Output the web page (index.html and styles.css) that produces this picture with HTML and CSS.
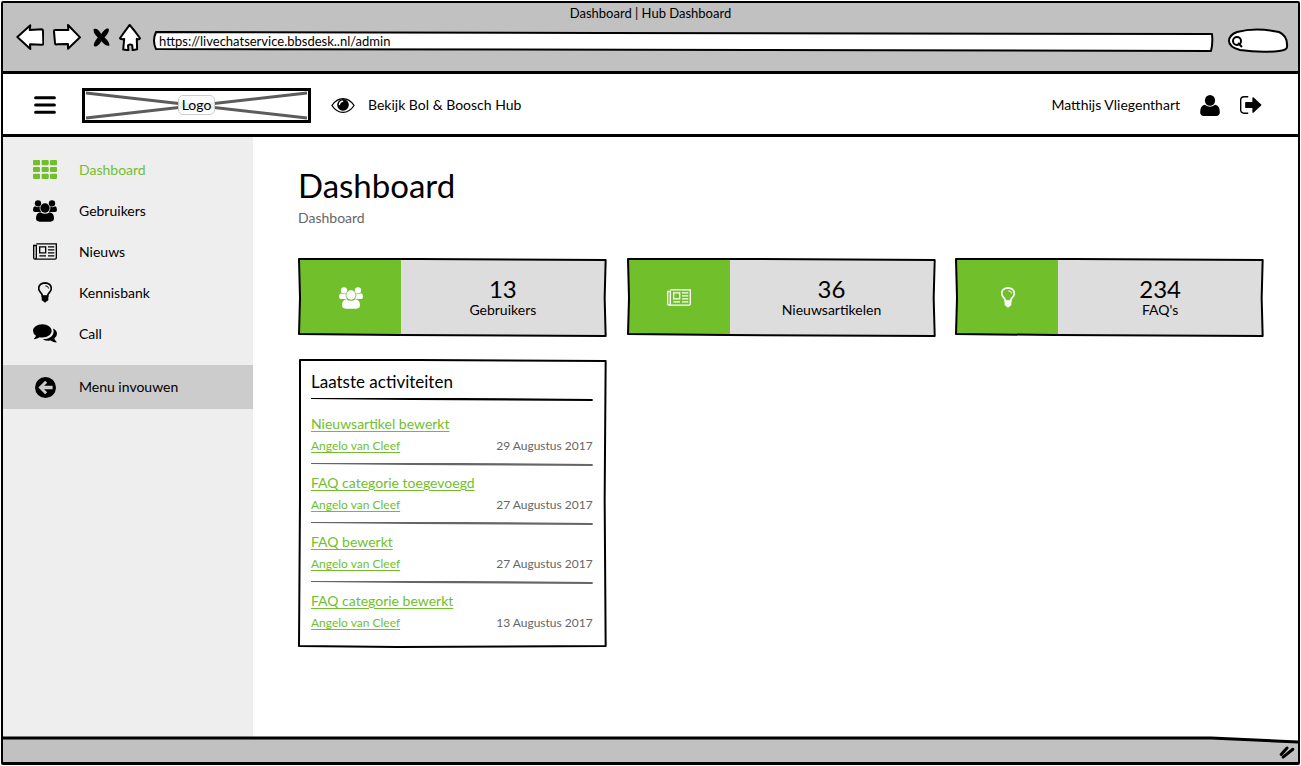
FILE: index.html
```html
<!DOCTYPE html>
<html lang="nl">
<head>
<meta charset="utf-8">
<meta name="viewport" content="width=device-width, initial-scale=1">
<title>Dashboard | Hub Dashboard</title>
<link rel="stylesheet" href="styles.css">
</head>
<body>
<svg class="sprite" aria-hidden="true">
  <symbol id="i-grid" viewBox="0 0 72 57"><path d="M3 0h15q3 0 3 3v10q0 3-3 3H3q-3 0-3-3V3q0-3 3-3zM29 0h15q3 0 3 3v10q0 3-3 3H29q-3 0-3-3V3q0-3 3-3zM54 0h15q3 0 3 3v10q0 3-3 3H54q-3 0-3-3V3q0-3 3-3zM3 21h15q3 0 3 3v9q0 3-3 3H3q-3 0-3-3v-9q0-3 3-3zM29 21h15q3 0 3 3v9q0 3-3 3H29q-3 0-3-3v-9q0-3 3-3zM54 21h15q3 0 3 3v9q0 3-3 3H54q-3 0-3-3v-9q0-3 3-3zM3 41h15q3 0 3 3v10q0 3-3 3H3q-3 0-3-3V44q0-3 3-3zM29 41h15q3 0 3 3v10q0 3-3 3H29q-3 0-3-3V44q0-3 3-3zM54 41h15q3 0 3 3v10q0 3-3 3H54q-3 0-3-3V44q0-3 3-3z"/></symbol>
  <symbol id="i-users" viewBox="0 0 72 66"><circle cx="15" cy="10" r="9.5"/><circle cx="57" cy="10" r="9.5"/><circle cx="36" cy="24" r="14"/><path d="M5 19q9 5 15 0q-2 10 4 17H6q-6 0-6-6q0-9 5-11zM67 19q-9 5-15 0q2 10-4 17h18q6 0 6-6q0-9-5-11zM22 37q14 9 28 0q13 2 13 18q0 10-11 10H20q-11 0-11-10q0-16 13-18z"/></symbol>
  <symbol id="i-news" viewBox="0 0 72 50"><path d="M10 2h60v42q0 4-4 4H6q-4 0-4-4V7h8v36q0 4-4 4M19 38h20M45 38h19M45 29h19M45 20h19M45 11h19M20 11h18v18H20z" fill="none" stroke="currentColor" stroke-width="4"/></symbol>
  <symbol id="i-bulb" viewBox="0 0 42 62"><path d="M13 42q0-6-6-12Q2 24 2 18Q3 3 21 2Q39 3 40 18q0 6-5 12q-6 6-6 12z" fill="none" stroke="currentColor" stroke-width="5"/><path d="M11 41h20v13q-2 2-5 3q-2 4-5 4t-5-4q-3-1-5-3z"/><path d="M22 11q9 0 10 8" fill="none" stroke="currentColor" stroke-width="3"/></symbol>
  <symbol id="i-chat" viewBox="0 0 72 56"><path d="M28 0c16 0 28 9 28 20S44 40 28 40q-4 0-8-1q-7 5-16 6q-2-1 0-3q4-3 5-7Q0 29 0 20C0 9 12 0 28 0zM60 13q12 6 12 16q0 9-8 14q1 5 6 9q2 2 0 3q-9 0-17-6q-14 2-24-4q18 0 27-9q9-10 4-23z"/></symbol>
  <symbol id="i-fold" viewBox="0 0 62 62"><path fill-rule="evenodd" d="M31 0a31 31 0 1 0 0 62a31 31 0 1 0 0-62zM10 31L30 11l6 6-9 9h25v10H27l9 9-6 6z"/></symbol>
  <symbol id="i-bars" viewBox="0 0 62 52"><path d="M4 5h54M4 26h54M4 47h54" stroke="currentColor" stroke-width="9" stroke-linecap="round"/></symbol>
  <symbol id="i-eye" viewBox="0 0 72 46"><path d="M2 23Q16 2 36 2t34 21Q56 44 36 44T2 23z" fill="none" stroke="currentColor" stroke-width="4"/><path fill-rule="evenodd" d="M36 3a18 18 0 1 0 0 36a18 18 0 1 0 0-36zM35 8q2 0 2 2t-2 2q-7 1-8 8q0 2-2 2t-2-2q1-11 12-12z"/></symbol>
  <symbol id="i-user" viewBox="0 0 58 62"><ellipse cx="29" cy="16" rx="15" ry="16"/><path d="M14 29q15 12 30 0q14 3 14 21q0 12-11 12H11Q0 62 0 50q0-18 14-21z"/></symbol>
  <symbol id="i-exit" viewBox="0 0 64 52"><path d="M24 2H12Q2 2 2 12v28q0 10 10 10h12" fill="none" stroke="currentColor" stroke-width="4"/><path d="M17 17h19V5q1-3 4-1l23 22-23 22q-3 2-4-1V35H17q-2 0-2-2V19q0-2 2-2z"/></symbol>
</svg>

<div class="window">
  <header class="chrome">
    <div class="chrome-title">Dashboard | Hub Dashboard</div>
    <div class="chrome-tools">
      <div class="chrome-nav">
        <button type="button" class="chrome-btn" aria-label="Vorige"><svg viewBox="0 0 84 78"><path class="ink" d="M4 39L43 4l-2 14 36-2q5 1 4 8l1 34q0 5-5 4l-35-1 1 14z"/></svg></button>
        <button type="button" class="chrome-btn" aria-label="Volgende"><svg viewBox="0 0 84 78"><path class="ink" d="M81 40L45 3l1 15H8q-6-1-5 5l3 34q0 6 5 4l34-1v14z"/></svg></button>
        <button type="button" class="chrome-btn stop" aria-label="Stoppen"><svg viewBox="0 0 50 58"><path d="M2 3q12-4 22 15Q36-1 46 2q4 10-12 26q16 14 14 24q-10 3-23-13Q12 58 4 54q-6-6 10-26Q0 16 2 3z"/></svg></button>
        <button type="button" class="chrome-btn home" aria-label="Startpagina"><svg viewBox="0 0 68 84"><path class="ink" d="M33 3Q48 20 65 44q-3 5-10 2l1 32-14 3-1-15q-6-5-13 0l1 15-16-2 3-33q-8 3-13-2Q18 23 33 3z"/></svg></button>
      </div>
      <div class="address">
        <svg class="sketch" viewBox="0 0 1060 21" preserveAspectRatio="none" aria-hidden="true"><path class="ink" d="M3 1L450 2 1058 3q1 9-1 17L600 19 3 18Q-1 10 3 1z"/></svg>
        <input class="address-input" type="text" aria-label="Adres" value="https://livechatservice.bbsdesk..nl/admin">
      </div>
      <div class="search">
        <svg class="sketch" viewBox="0 0 60 25" aria-hidden="true"><path class="ink" d="M9 4Q28-1 51 4q9 4 8 15q0 3-8 4q-19 2-39-1Q1 19 1 13Q1 7 9 4z"/><circle class="ink" cx="9" cy="13" r="4"/><path class="ink" d="M10 15l4 4"/></svg>
        <input class="search-input" type="search" aria-label="Zoeken">
      </div>
    </div>
  </header>

  <div class="topbar">
    <button type="button" class="icon-btn menu-btn" aria-label="Menu"><svg class="ic-bars"><use href="#i-bars"/></svg></button>
    <div class="logo">
      <svg class="sketch" viewBox="3 3 223 29" preserveAspectRatio="none" aria-hidden="true"><path class="cross" d="M4 5L225 30M4 30L225 5"/></svg>
      <span class="logo-label">Logo</span>
    </div>
    <a class="hub-link" href="#hub"><svg class="ic-eye"><use href="#i-eye"/></svg>Bekijk Bol &amp; Boosch Hub</a>
    <div class="account">
      <span>Matthijs Vliegenthart</span>
      <button type="button" class="icon-btn" aria-label="Profiel"><svg class="ic-user"><use href="#i-user"/></svg></button>
      <button type="button" class="icon-btn" aria-label="Uitloggen"><svg class="ic-exit"><use href="#i-exit"/></svg></button>
    </div>
  </div>

  <div class="page">
    <nav class="sidebar">
      <a class="nav-item active" href="#dashboard"><span class="nav-icon"><svg class="ic-grid"><use href="#i-grid"/></svg></span>Dashboard</a>
      <a class="nav-item" href="#gebruikers"><span class="nav-icon"><svg class="ic-users"><use href="#i-users"/></svg></span>Gebruikers</a>
      <a class="nav-item" href="#nieuws"><span class="nav-icon"><svg class="ic-news"><use href="#i-news"/></svg></span>Nieuws</a>
      <a class="nav-item" href="#kennisbank"><span class="nav-icon"><svg class="ic-bulb"><use href="#i-bulb"/></svg></span>Kennisbank</a>
      <a class="nav-item" href="#call"><span class="nav-icon"><svg class="ic-chat"><use href="#i-chat"/></svg></span>Call</a>
      <button type="button" class="nav-item fold"><span class="nav-icon"><svg class="ic-fold"><use href="#i-fold"/></svg></span>Menu invouwen</button>
    </nav>

    <main class="content">
      <h1>Dashboard</h1>
      <p class="crumb">Dashboard</p>
      <div class="cards">
        <section class="card stat">
          <div class="stat-icon"><svg class="ic-users"><use href="#i-users"/></svg></div>
          <div class="stat-text"><strong>13</strong><span>Gebruikers</span></div>
          <svg class="sketch" viewBox="0 0 309 79" preserveAspectRatio="none" aria-hidden="true"><path class="outline card-line" d="M1 1L120 1 308 2 307 40 308 78 100 77 1 76 2 40z"/></svg>
        </section>
        <section class="card stat">
          <div class="stat-icon"><svg class="ic-news"><use href="#i-news"/></svg></div>
          <div class="stat-text"><strong>36</strong><span>Nieuwsartikelen</span></div>
          <svg class="sketch" viewBox="0 0 309 79" preserveAspectRatio="none" aria-hidden="true"><path class="outline card-line" d="M1 1L120 1 308 2 307 40 308 78 100 77 1 76 2 40z"/></svg>
        </section>
        <section class="card stat">
          <div class="stat-icon"><svg class="ic-bulb"><use href="#i-bulb"/></svg></div>
          <div class="stat-text"><strong>234</strong><span>FAQ's</span></div>
          <svg class="sketch" viewBox="0 0 309 79" preserveAspectRatio="none" aria-hidden="true"><path class="outline card-line" d="M1 1L120 1 308 2 307 40 308 78 100 77 1 76 2 40z"/></svg>
        </section>
        <section class="card panel">
          <svg class="sketch" viewBox="0 0 309 289" preserveAspectRatio="none" aria-hidden="true"><path class="outline card-line" d="M2 1L120 1 308 2 307 140 308 287 100 288 1 287 2 140z"/></svg>
          <h2>Laatste activiteiten</h2>
          <svg class="rule dark" viewBox="0 0 282 3" preserveAspectRatio="none" aria-hidden="true"><path d="M0 0L150 0 282 1 282 3 100 2 0 1z"/></svg>
          <ul class="feed">
            <li><a class="feed-title" href="#a1">Nieuwsartikel bewerkt</a><div class="feed-meta"><a href="#u1">Angelo van Cleef</a><time datetime="2017-08-29">29 Augustus 2017</time></div><svg class="rule" viewBox="0 0 282 3" preserveAspectRatio="none" aria-hidden="true"><path d="M0 0L150 0 282 1 282 3 100 2 0 1z"/></svg></li>
            <li><a class="feed-title" href="#a2">FAQ categorie toegevoegd</a><div class="feed-meta"><a href="#u1">Angelo van Cleef</a><time datetime="2017-08-27">27 Augustus 2017</time></div><svg class="rule" viewBox="0 0 282 3" preserveAspectRatio="none" aria-hidden="true"><path d="M0 0L150 0 282 1 282 3 100 2 0 1z"/></svg></li>
            <li><a class="feed-title" href="#a3">FAQ bewerkt</a><div class="feed-meta"><a href="#u1">Angelo van Cleef</a><time datetime="2017-08-27">27 Augustus 2017</time></div><svg class="rule" viewBox="0 0 282 3" preserveAspectRatio="none" aria-hidden="true"><path d="M0 0L150 0 282 1 282 3 100 2 0 1z"/></svg></li>
            <li><a class="feed-title" href="#a4">FAQ categorie bewerkt</a><div class="feed-meta"><a href="#u1">Angelo van Cleef</a><time datetime="2017-08-13">13 Augustus 2017</time></div></li>
          </ul>
        </section>
      </div>
    </main>
  </div>

  <footer class="statusbar">
    <svg class="edge" viewBox="0 0 1295 6" preserveAspectRatio="none" aria-hidden="true"><path class="edge-fill" d="M1208 0H1295V5L1208 1z"/><path class="outline" d="M0 1H1208L1295 5"/></svg>
    <svg class="grip" viewBox="0 0 48 40" aria-hidden="true"><path d="M6 26L24 6M12 34L42 10" stroke="currentColor" stroke-width="9" stroke-linecap="round"/></svg>
  </footer>
</div>
</body>
</html>
```
FILE: styles.css
```css
* { box-sizing: border-box; }
body {
  margin: 0;
  padding: 1px;
  background: #fff;
  color: #000;
  font: 14px/20px Lato, "Open Sans", sans-serif;
}
svg { display: block; fill: currentColor; }
a { color: inherit; text-decoration: none; }
button { border: 0; padding: 0; background: none; color: inherit; font: inherit; cursor: pointer; }
.sprite { position: absolute; width: 0; height: 0; }
.sketch { position: absolute; inset: 0; width: 100%; height: 100%; overflow: visible; pointer-events: none; }
.ink { fill: #fff; stroke: #000; stroke-width: 2; vector-effect: non-scaling-stroke; stroke-linejoin: round; }
.outline { fill: none; stroke: #000; stroke-width: 3; vector-effect: non-scaling-stroke; stroke-linejoin: round; }
.card-line { stroke-width: 2; }

.window {
  display: flex;
  flex-direction: column;
  min-height: calc(100vh - 2px);
  border: 2px solid #000;
  border-bottom-width: 3px;
  border-radius: 2px;
}

.chrome { padding-bottom: 18px; background: #c1c1c1; border-bottom: 3px solid #000; }
.chrome-title { font-size: 13px; text-align: center; }
.chrome-tools { display: flex; align-items: flex-end; padding: 0 10px 0 13px; height: 30px; }
.chrome-nav { display: flex; align-items: center; padding-bottom: 2px; }
.chrome-btn { width: 28px; margin-right: 9px; }
.chrome-btn.stop { width: 17px; margin: 0 9px 0 3px; }
.chrome-btn.home { width: 22px; margin-right: 12px; }
.chrome-btn svg { width: 100%; }
.address { position: relative; flex: 1; height: 21px; margin-bottom: 1px; }
.address-input, .search-input {
  position: relative;
  display: block;
  width: 100%;
  height: 100%;
  border: 0;
  padding: 0 6px 2px;
  background: none;
  color: #000;
  font: 13px/18px Lato, "Open Sans", sans-serif;
}
.search { position: relative; width: 60px; height: 25px; margin-left: 14px; }
.search-input { padding-left: 18px; }

.topbar { display: flex; align-items: center; height: 63px; padding: 2px 36px 0 31px; border-bottom: 3px solid #000; }
.menu-btn { margin-right: 26px; }
.logo { position: relative; display: flex; align-items: center; justify-content: center; width: 229px; height: 35px; margin-right: 20px; border: 3px solid #000; }
.cross { fill: none; stroke: #5c5c5c; stroke-width: 3; vector-effect: non-scaling-stroke; }
.logo-label { position: relative; padding: 0 3px; border: 1px solid #ccc; border-radius: 5px; background: rgba(255, 255, 255, .9); line-height: 18px; }
.hub-link { display: flex; align-items: center; gap: 13px; }
.account { display: flex; align-items: center; gap: 20px; margin-left: auto; }

.ic-bars { width: 22px; height: 18px; }
.ic-eye { width: 24px; height: 15px; }
.ic-user { width: 20px; height: 21px; }
.ic-exit { width: 22px; height: 18px; }
.ic-grid { width: 24px; height: 19px; }
.ic-users { width: 24px; height: 22px; }
.ic-news { width: 24px; height: 17px; }
.ic-bulb { width: 14px; height: 21px; }
.ic-chat { width: 24px; height: 19px; }
.ic-fold { width: 21px; height: 21px; }

.page { display: flex; flex: 1; }
.sidebar { width: 250px; padding-top: 12px; background: #eee; }
.nav-item { display: flex; align-items: center; width: 100%; height: 41px; padding-left: 30px; }
.nav-icon { display: flex; justify-content: center; width: 24px; margin-right: 22px; }
.active { color: #70bf2b; }
.fold { height: 44px; margin-top: 11px; background: #ccc; }

.content { flex: 1; padding: 28px 34px 32px 45px; }
h1 { margin: 0; font-size: 33px; font-weight: 400; line-height: 40px; }
.crumb { margin: 3px 0 30px; color: #666; }
.cards { display: grid; grid-template-columns: repeat(3, minmax(0, 1fr)); gap: 22px 20px; align-items: start; }
.card { position: relative; }
.stat { display: flex; height: 79px; padding: 2px; }
.stat-icon { display: flex; align-items: center; justify-content: center; width: 101px; background: #70bf2b; color: #fff; }
.stat-text { display: flex; flex: 1; flex-direction: column; align-items: center; justify-content: center; background: #ddd; }
.stat-text strong { font-size: 24px; font-weight: 400; line-height: 24px; }
.stat-text span { line-height: 18px; }
.panel { padding: 13px 14px 14px 13px; }
h2 { margin: 0 0 6px; font-size: 17px; font-weight: 400; line-height: 20px; }
.rule { width: 100%; height: 3px; color: #666; }
.rule.dark { color: #000; }
.feed { margin: 0; padding: 13px 0 0; list-style: none; }
.feed li { height: 59px; }
.feed li:last-child { height: 43px; }
.feed a { color: #70bf2b; text-decoration: underline; text-underline-offset: 2px; }
.feed-title { display: block; width: max-content; }
.feed-meta { display: flex; justify-content: space-between; margin: 3px 0 8px; font-size: 12px; line-height: 18px; }
time { color: #666; }

.statusbar { position: relative; display: flex; align-items: center; justify-content: flex-end; height: 25px; padding: 5px 3px 0 0; background: #c1c1c1; }
.edge { position: absolute; top: 0; left: 0; width: 100%; height: 6px; overflow: visible; }
.edge-fill { fill: #fff; }
.grip { width: 16px; height: 13px; }
```
